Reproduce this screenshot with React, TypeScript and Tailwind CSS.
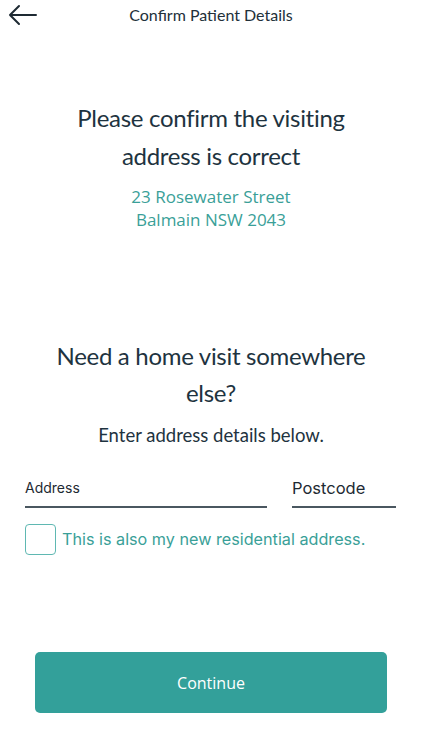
const HEAD = "font-['Lato','Noto_Sans',sans-serif]";
const BODY = "font-['Open_Sans','Noto_Sans',sans-serif]";
const UI = "font-['Inter','Noto_Sans',sans-serif]";

const App = () => {
  return (
    <div className="w-[422px] h-[750px] bg-white flex flex-col text-[#1e3340]">
      {/* header */}
      <div className="relative h-[29px] flex items-center justify-center">
        <button className="absolute left-[8px] top-[3px]">
          <svg width="30" height="24" viewBox="0 0 30 24" fill="none" stroke="#1e2a33" strokeWidth="2" strokeLinecap="round" strokeLinejoin="round">
            <path d="M28 12H2M11 3L2 12l9 9" />
          </svg>
        </button>
        <h1 className={`${HEAD} text-[16px] text-[#22303a]`}>Confirm Patient Details</h1>
      </div>

      {/* current address */}
      <div className="mt-[70px] flex flex-col items-center text-center">
        <h2 className={`${HEAD} text-[24px] leading-[38px] tracking-[-0.3px] text-[#1e3340]`}>
          Please confirm the visiting
          <br />
          address is correct
        </h2>
        <p className={`${BODY} mt-[10px] text-[17px] leading-[23px] text-[#3a9f98]`}>
          23 Rosewater Street
          <br />
          Balmain NSW 2043
        </p>
      </div>

      {/* other address */}
      <div className="mt-[106px] flex flex-col items-center text-center">
        <h2 className={`${HEAD} text-[24px] leading-[37px] tracking-[-0.3px] text-[#1e3340]`}>
          Need a home visit somewhere
          <br />
          else?
        </h2>
        <p className={`${HEAD} mt-[12px] text-[18.5px] leading-[25px] text-[#1e3340]`}>Enter address details below.</p>
      </div>

      <div className="mt-[28px] px-[25px] flex items-end gap-[25px]">
        <div className="w-[242px] border-b-2 border-[#4a5760] pb-[8px] leading-[20px]">
          <span className={`${UI} text-[14px] text-[#1e2a33]`}>Address</span>
        </div>
        <div className="w-[104px] border-b-2 border-[#4a5760] pb-[6px] leading-[24px]">
          <span className={`${UI} text-[16.5px] text-[#1e2a33]`}>Postcode</span>
        </div>
      </div>

      <label className="mt-[16px] ml-[25px] flex items-center gap-[6px]">
        <span className="w-[31px] h-[31px] rounded-[4px] border border-[#5fb8b2]" />
        <span className={`${UI} text-[16.2px] text-[#3a9f98]`}>This is also my new residential address.</span>
      </label>

      <div className="flex-1" />

      <button className={`${BODY} mx-[35px] mb-[37px] h-[61px] rounded-[5px] bg-[#33a09a] text-white text-[16px]`}>
        Continue
      </button>
    </div>
  );
};

export default App;
